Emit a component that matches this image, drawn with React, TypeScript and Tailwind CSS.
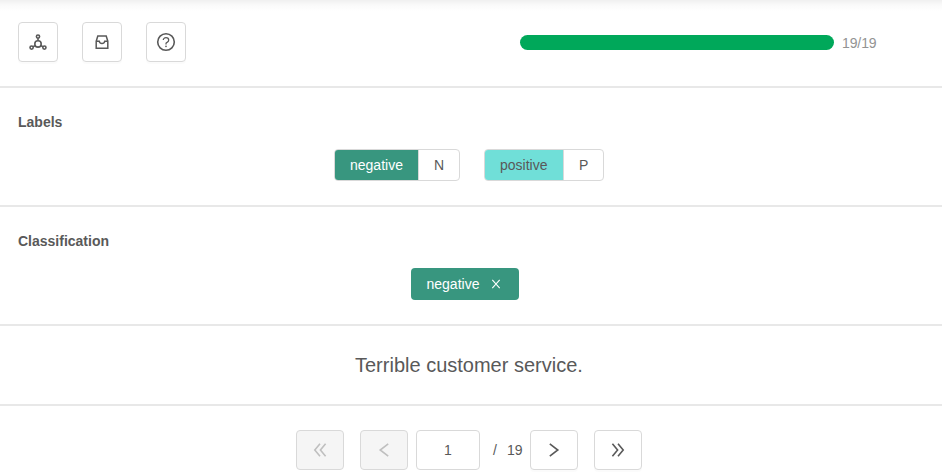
import type { ReactNode } from "react";

function IconButton({ label, children }: { label: string; children: ReactNode }) {
  return (
    <button aria-label={label} className="flex size-10 items-center justify-center rounded-[4px] border border-[#d9d9d9] bg-white text-[#595959] shadow-[0_2px_0_rgba(0,0,0,0.016)]">
      {children}
    </button>
  );
}

function Tag({ name, hotkey, color, width }: { name: string; hotkey: string; color: string; width: string }) {
  return (
    <button className={`flex h-8 items-stretch overflow-hidden rounded-[4px] border border-[#d9d9d9] bg-white ${width}`}>
      <span className={`flex items-center pl-[15px] ${color}`}>{name}</span>
      <span className="flex flex-1 items-center justify-center border-l border-[#d9d9d9]">{hotkey}</span>
    </button>
  );
}

function PageButton({ path, label, disabled = false }: { path: string; label: string; disabled?: boolean }) {
  return (
    <button
      aria-label={label}
      disabled={disabled}
      className={`flex h-10 w-12 items-center justify-center rounded-[4px] border border-[#d9d9d9] ${disabled ? "bg-[#f5f5f5] text-[#bfbfbf]" : "bg-white text-[#595959] shadow-[0_2px_0_rgba(0,0,0,0.016)]"}`}
    >
      <svg width="16" height="16" viewBox="0 0 16 16" fill="none" stroke="currentColor" strokeWidth="1.6">
        <path d={path} />
      </svg>
    </button>
  );
}

export default function App() {
  return (
    <div className="h-[474px] overflow-hidden bg-white font-['Liberation_Sans',Arial,sans-serif] text-sm leading-[22px] text-[#595959]">
      <header className="flex h-[88px] items-start border-b-2 border-[#e8e8e8] bg-[linear-gradient(to_bottom,#f0f0f0,#fafafa_5px,#ffffff_11px)] pt-[22px] pl-[18px]">
        <div className="flex gap-6">
          <IconButton label="Model">
            <svg width="20" height="20" viewBox="0 0 20 20" fill="none" stroke="currentColor" strokeWidth="1.6">
              <circle cx="10" cy="11.9" r="3.2" />
              <circle cx="10" cy="4.6" r="1.6" />
              <circle cx="3.6" cy="15.6" r="1.6" />
              <circle cx="16.4" cy="15.6" r="1.6" />
              <path d="M10 6.2v2.4M7.2 13.6 5 14.8M12.8 13.6 15 14.8" />
            </svg>
          </IconButton>
          <IconButton label="Archive">
            <svg width="16" height="16" viewBox="0 0 16 16" fill="none" stroke="currentColor" strokeWidth="1.5">
              <path d="M2.2 7.2 3.8 2.1h8.4l1.6 5.1v7H2.2zM2.2 7.3h3.1c.3 1.4 1.2 2.2 2.7 2.2s2.4-.8 2.7-2.2h3.1" />
            </svg>
          </IconButton>
          <IconButton label="Help">
            <svg width="20" height="20" viewBox="0 0 20 20" fill="none" stroke="currentColor" strokeWidth="1.6">
              <circle cx="10" cy="10" r="8.3" />
              <path d="M7.3 8.1c0-1.4 1.1-2.4 2.7-2.4s2.7 1 2.7 2.4c0 1.1-.6 1.8-1.6 2.2-.8.3-1.1.7-1.1 1.4v.7" strokeWidth="1.3" />
              <circle cx="10" cy="14.3" r=".85" fill="currentColor" stroke="none" />
            </svg>
          </IconButton>
        </div>
        <div className="ml-[334px] flex h-10 items-center">
          <div className="mt-px h-[15px] w-[314px] rounded-full bg-[#00a85a]" />
          <span className="mt-[2px] ml-2 tracking-[-0.1px] text-[#939393]">19/19</span>
        </div>
      </header>

      <section className="h-[119px] border-b-2 border-[#e8e8e8] pt-[23px]">
        <h2 className="pl-[18px] font-bold">Labels</h2>
        <div className="mt-4 flex gap-6 pl-[334px]">
          <Tag name="negative" hotkey="N" color="bg-[#38967f] pr-[15px] text-white" width="w-[126px]" />
          <Tag name="positive" hotkey="P" color="bg-[#70dfd8] pr-4" width="w-[120px]" />
        </div>
      </section>

      <section className="h-[119px] border-b-2 border-[#e8e8e8] pt-[23px]">
        <h2 className="pl-[18px] font-bold">Classification</h2>
        <div className="mt-4 flex pl-[411px]">
          <button className="flex h-8 w-[108px] items-center rounded-[4px] bg-[#38967f] pl-[15.5px] text-white">
            negative
            <svg className="ml-[11.5px]" width="10" height="10" viewBox="0 0 10 10" fill="none" stroke="currentColor" strokeWidth="1.1">
              <path d="M1.3.9 8.7 9.1M8.7.9 1.3 9.1" />
            </svg>
          </button>
        </div>
      </section>

      <p className="flex h-20 items-center border-b-2 border-[#e8e8e8] pl-[355px] text-xl">Terrible customer service.</p>

      <nav className="flex pt-6 pl-[296px]">
        <PageButton label="First page" disabled path="M8 1.8 2.8 8 8 14.2M13.6 1.8 8.4 8l5.2 6.2" />
        <div className="ml-4">
          <PageButton label="Previous page" disabled path="M12.2 1.9 4.2 8l8 6.1" />
        </div>
        <div className="ml-2 flex h-10 w-16 items-center justify-center rounded-[4px] border border-[#d9d9d9]">1</div>
        <div className="flex h-10 w-[50px] items-center pl-[13px]">
          <span>/</span>
          <span className="ml-[10px]">19</span>
        </div>
        <PageButton label="Next page" path="M3.8 1.9 11.8 8l-8 6.1" />
        <div className="ml-4">
          <PageButton label="Last page" path="M2.4 1.8 7.6 8l-5.2 6.2M8 1.8 13.2 8 8 14.2" />
        </div>
      </nav>
    </div>
  );
}
